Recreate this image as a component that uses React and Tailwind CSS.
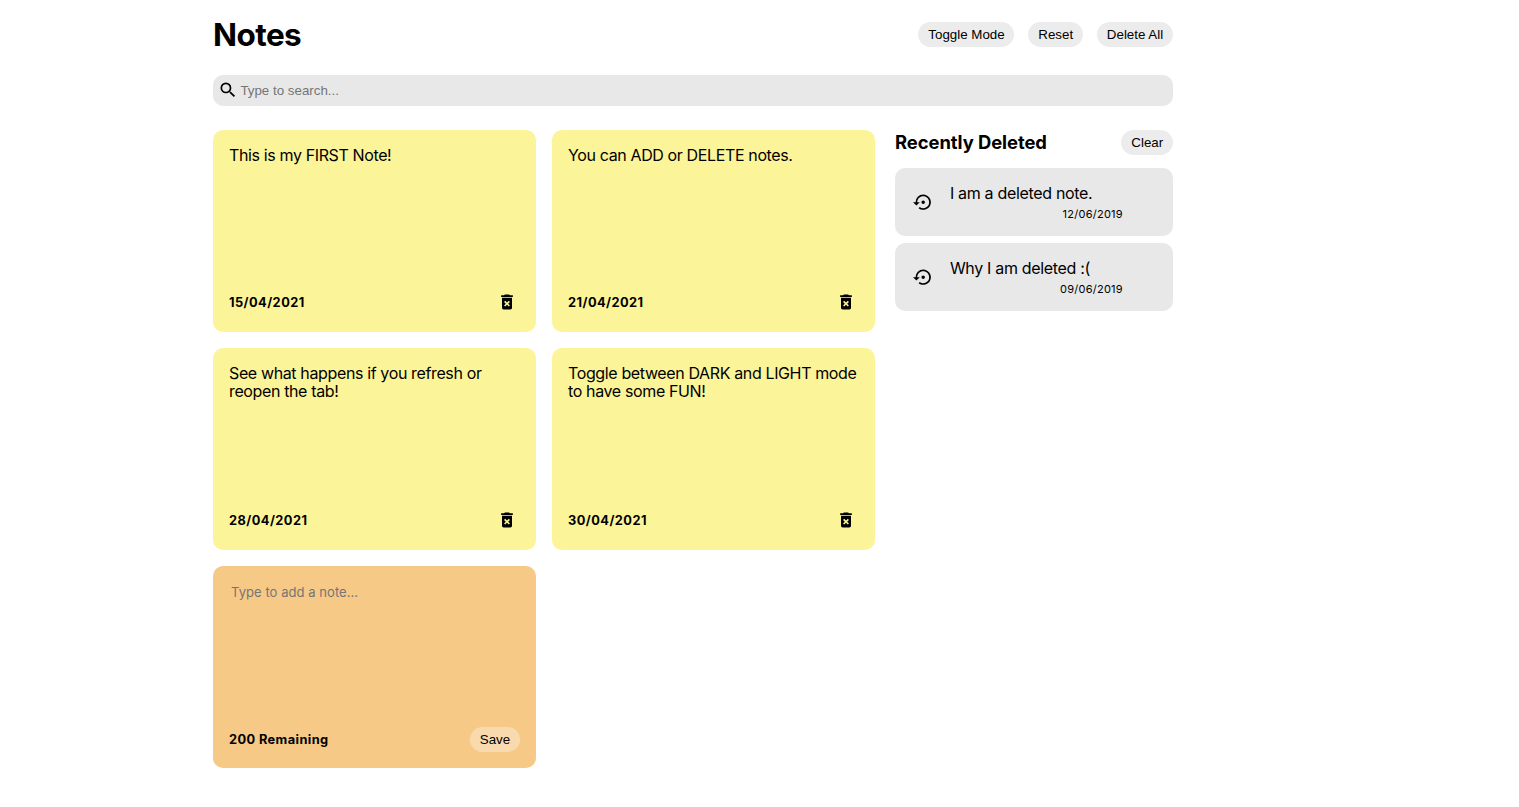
import { MdDeleteForever, MdSearch, MdSettingsBackupRestore } from "react-icons/md";

const notes = [
  { text: "This is my FIRST Note!", date: "15/04/2021" },
  { text: "You can ADD or DELETE notes.", date: "21/04/2021" },
  { text: "See what happens if you refresh or reopen the tab!", date: "28/04/2021" },
  { text: "Toggle between DARK and LIGHT mode to have some FUN!", date: "30/04/2021" },
];

const deleted = [
  { text: "I am a deleted note.", date: "12/06/2019" },
  { text: "Why I am deleted :(", date: "09/06/2019" },
];

function Button({ children, className = "bg-[#ececec]" }) {
  return (
    <button
      className={`h-[25px] shrink-0 whitespace-nowrap rounded-full px-[9.85px] font-['Liberation_Sans',sans-serif] text-[13.33px] leading-[15px] ${className}`}
    >
      {children}
    </button>
  );
}

function Note({ text, date }) {
  return (
    <div className="flex h-[202px] flex-col justify-between rounded-[10px] bg-[#fcf499] p-4">
      <p className="text-[16px] leading-[18px] tracking-[-0.37px]">{text}</p>
      <div className="flex h-[27px] items-center justify-between pr-[3px]">
        <span className="text-[12.8px] font-bold leading-[17px] tracking-[0.45px]">{date}</span>
        <MdDeleteForever className="mb-px size-5" />
      </div>
    </div>
  );
}

function DeletedNote({ text, date }) {
  return (
    <div className="flex h-[68px] items-center rounded-[10px] bg-[#e8e8e8] pl-[18px]">
      <MdSettingsBackupRestore className="size-[20.4px]" />
      <div className="ml-[16.5px] w-[173px] pt-px">
        <p className="text-[16px] leading-[18px] tracking-[-0.32px]">{text}</p>
        <p className="mt-[6px] text-right text-[11px] leading-[13px] tracking-[0.25px]">{date}</p>
      </div>
    </div>
  );
}

export default function App() {
  return (
    <div className="min-h-[807px] bg-white pl-[213px] font-[Inter,sans-serif] text-black">
      <main className="w-[960px] pt-4">
        <header className="flex h-[38px] items-center justify-between">
          <h1 className="pb-px text-[31.5px] font-bold leading-[38px] tracking-[-0.55px]">Notes</h1>
          <div className="flex gap-[14px] pb-[2px]">
            <Button>Toggle Mode</Button>
            <Button>Reset</Button>
            <Button>Delete All</Button>
          </div>
        </header>
        <div className="mt-[21px] flex h-[31px] items-center rounded-[10px] bg-[#e8e8e8] pl-[5px]">
          <MdSearch className="mb-px size-5" />
          <input
            className="ml-[2.4px] flex-1 bg-transparent font-['Liberation_Sans',sans-serif] text-[13.33px] leading-[15px] outline-none placeholder:text-[#757575]"
            placeholder="Type to search..."
          />
        </div>
        <div className="mt-6 flex gap-5">
          <section className="grid w-[662px] grid-cols-2 gap-4">
            {notes.map((n) => (
              <Note key={n.date} {...n} />
            ))}
            <div className="flex h-[202px] flex-col justify-between rounded-[10px] bg-[#f6c987] p-4">
              <textarea
                className="h-[120px] resize-none bg-transparent px-0.5 pt-0.5 text-[13px] leading-4 tracking-[0.06px] outline-none placeholder:text-[#757575]"
                placeholder="Type to add a note..."
              />
              <div className="flex h-[25px] items-center justify-between">
                <span className="text-[12.8px] font-bold leading-[17px] tracking-[0.4px]">200 Remaining</span>
                <Button className="bg-[#f9daaf]">Save</Button>
              </div>
            </div>
          </section>
          <aside className="w-[278px]">
            <div className="flex h-[25px] items-center justify-between">
              <h2 className="whitespace-nowrap pb-[2px] text-[18.4px] font-bold leading-[22px] tracking-[-0.05px]">Recently Deleted</h2>
              <Button>Clear</Button>
            </div>
            <div className="mt-[13px] flex flex-col gap-[7px]">
              {deleted.map((n) => (
                <DeletedNote key={n.date} {...n} />
              ))}
            </div>
          </aside>
        </div>
      </main>
    </div>
  );
}
